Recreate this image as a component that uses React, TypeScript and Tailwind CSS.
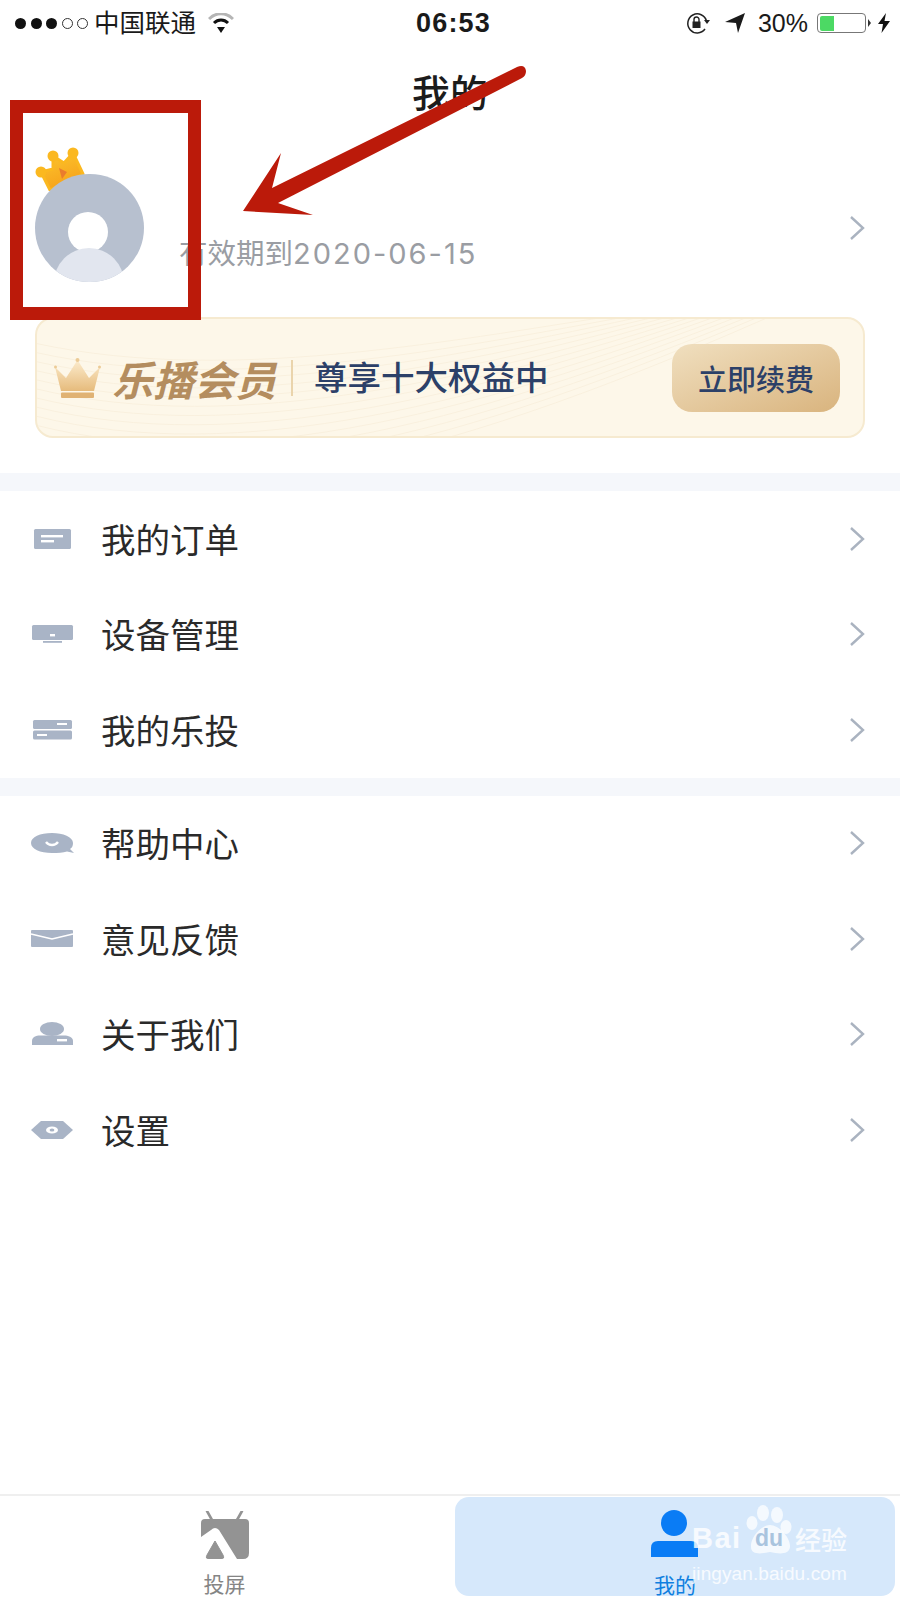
// App.tsx - "我的" profile screen
import React from "react";

const cjk = "font-['Noto_Sans_CJK_SC','Noto_Sans',sans-serif]";

const Chevron = () => (
  <svg width="16" height="24" viewBox="0 0 16 24" fill="none" className="shrink-0">
    <path d="M2 1 L14 12 L2 23" stroke="#aab3c0" strokeWidth="2.4" />
  </svg>
);

// menu glyphs, all on a 44x24 box
const icons: Record<string, React.ReactNode> = {
  order: (
    <>
      <rect x="4" y="2" width="37" height="20" rx="1.5" fill="#a9b4c6" />
      <rect x="11" y="8" width="22" height="2.4" fill="#fff" />
      <rect x="11" y="13" width="13" height="2.4" fill="#fff" />
    </>
  ),
  device: (
    <>
      <rect x="2" y="3" width="41" height="15" rx="1.5" fill="#a9b4c6" />
      <rect x="20" y="12" width="5" height="2.4" fill="#fff" />
      <rect x="13" y="19" width="19" height="1.8" fill="#a9b4c6" />
    </>
  ),
  projector: (
    <>
      <rect x="3" y="2" width="39" height="9" rx="1.5" fill="#a9b4c6" />
      <rect x="3" y="12.5" width="39" height="9" rx="1.5" fill="#a9b4c6" />
      <rect x="27" y="5" width="10" height="2" fill="#fff" />
      <rect x="7" y="16" width="10" height="2" fill="#fff" />
    </>
  ),
  help: (
    <>
      <path
        d="M22 2 C33 2 43 6 43 12 C43 15 42 17 40 18 L44 22 L37 20.5 C33 22 28 22 22 22 C10 22 1 18 1 12 C1 6 10 2 22 2 Z"
        fill="#a9b4c6"
      />
      <path d="M16 11 C19 15 25 15 28 11" stroke="#fff" strokeWidth="2.4" fill="none" />
    </>
  ),
  mail: (
    <>
      <rect x="1" y="3" width="42" height="17" rx="1" fill="#a9b4c6" />
      <path d="M1 7 L22 12 L43 7" stroke="#fff" strokeWidth="1.6" fill="none" />
    </>
  ),
  about: (
    <>
      <ellipse cx="22" cy="7" rx="12" ry="7" fill="#a9b4c6" />
      <path d="M2 23 L2 19 C2 15 6 13.5 10 13.5 L34 13.5 C38 13.5 43 15 43 19 L43 23 Z" fill="#a9b4c6" />
      <rect x="27" y="17" width="10" height="2.4" fill="#fff" />
    </>
  ),
  settings: (
    <>
      <path d="M11 3 L33 3 L43 12 L33 21 L11 21 L1 12 Z" fill="#a9b4c6" />
      <ellipse cx="22" cy="12" rx="6" ry="3.6" fill="#fff" />
      <ellipse cx="22" cy="12" rx="2.4" ry="1.5" fill="#a9b4c6" />
    </>
  ),
};

const groupOne = [
  { icon: "order", label: "我的订单" },
  { icon: "device", label: "设备管理" },
  { icon: "projector", label: "我的乐投" },
];

const groupTwo = [
  { icon: "help", label: "帮助中心" },
  { icon: "mail", label: "意见反馈" },
  { icon: "about", label: "关于我们" },
  { icon: "settings", label: "设置" },
];

const MenuRow = ({ icon, label }: { icon: string; label: string }) => (
  <div className="flex h-[95.5px] items-center pl-[30px] pr-[35px]">
    <svg width="44" height="24" viewBox="0 0 44 24" className="shrink-0">
      {icons[icon]}
    </svg>
    <span className={`ml-[27px] flex-1 -translate-y-[1px] text-[34.5px] leading-[40px] text-[#2a2a2a] ${cjk}`}>{label}</span>
    <Chevron />
  </div>
);

const StatusBar = () => (
  <div className="grid h-[46px] grid-cols-[1fr_auto_1fr] items-center font-['Liberation_Sans',sans-serif] text-[#1a1a1a]">
    <div className="flex items-center pl-[15px]">
      <div className="flex gap-[4.5px]">
        <span className="h-[11px] w-[11px] rounded-full bg-[#111]" />
        <span className="h-[11px] w-[11px] rounded-full bg-[#111]" />
        <span className="h-[11px] w-[11px] rounded-full bg-[#111]" />
        <span className="h-[11px] w-[11px] rounded-full border border-[#333]" />
        <span className="h-[11px] w-[11px] rounded-full border border-[#333]" />
      </div>
      <span className={`ml-[6px] -translate-y-[2px] text-[25.5px] leading-[30px] ${cjk}`}>中国联通</span>
      <svg width="26" height="20" viewBox="0 0 26 20" className="ml-[12px]">
        <path d="M1 6 C8 -1 18 -1 25 6" stroke="#b5b5b5" strokeWidth="3" fill="none" />
        <path d="M6 10 C10 6 16 6 20 10" stroke="#111" strokeWidth="3" fill="none" />
        <path d="M9 14 L17 14 L13 20 Z" fill="#111" />
      </svg>
    </div>
    <span className="pl-[7px] text-[27px] font-bold leading-[30px] tracking-[1.2px]">06:53</span>
    <div className="flex items-center justify-end pr-[10px]">
      <svg width="25" height="22" viewBox="0 0 25 22" fill="none">
        <path d="M19 17 A9.5 9.5 0 1 1 20.5 9" stroke="#222" strokeWidth="1.5" />
        <path d="M18 8 L24 8 L21 12 Z" fill="#222" />
        <rect x="6.5" y="9.5" width="8" height="6.5" fill="#222" />
        <path d="M8 10 V7.5 a2.5 2.5 0 0 1 5 0 V10" stroke="#222" strokeWidth="1.4" />
      </svg>
      <svg width="20" height="20" viewBox="0 0 20 20" className="ml-[14px]">
        <path d="M0 9 L20 0 L13 20 L11 10 Z" fill="#1a1a1a" />
      </svg>
      <span className="ml-[13px] text-[25px] leading-[30px]">30%</span>
      <div className="ml-[9px] flex h-[20px] w-[49px] rounded-[4px] border border-[#777] p-[1.5px]">
        <div className="h-full w-[14px] rounded-l-[2px] bg-[#4cd964]" />
      </div>
      <span className="ml-[2px] h-0 w-0 border-y-[4px] border-l-[3px] border-y-transparent border-l-[#333]" />
      <svg width="12" height="20" viewBox="0 0 12 20" className="ml-[7px]">
        <path d="M8 0 L0 11 L5 11 L3.5 20 L12 8 L6.5 8 Z" fill="#111" />
      </svg>
    </div>
  </div>
);

const MemberBanner = () => (
  <div className="relative mx-[35px] mt-[35px] flex h-[121px] items-center overflow-hidden rounded-[18px] border-2 border-[#f6ead0] bg-[#fdf7e9] pl-[17px] pr-[23px]">
    <svg width="830" height="121" viewBox="0 0 830 121" fill="none" className="absolute left-0 top-0">
      {[0, 1, 2, 3, 4, 5, 6, 7, 8, 9, 10, 11, 12, 13].map((i) => (
        <path
          key={i}
          d={`M${-20} ${i * 9 + 20} C${180} ${i * 10 + 70} ${420} ${i * 9 + 20} ${620 + i * 10} ${-10} `}
          stroke="#f9f0de"
          strokeWidth="1"
        />
      ))}
    </svg>
    <svg width="47" height="40" viewBox="0 0 47 40" className="relative shrink-0">
      <defs>
        <linearGradient id="bannerCrown" x1="0" y1="0" x2="0" y2="1">
          <stop offset="0" stopColor="#fcecce" />
          <stop offset="1" stopColor="#e6bb7c" />
        </linearGradient>
      </defs>
      <path d="M1 9 L12 20 L23.5 2 L35 20 L46 9 L40 33 L7 33 Z" fill="url(#bannerCrown)" />
      <circle cx="23.5" cy="2" r="2" fill="#eccb96" />
      <circle cx="1.5" cy="9" r="1.5" fill="#eccb96" />
      <circle cx="45.5" cy="9" r="1.5" fill="#eccb96" />
      <rect x="7" y="34.5" width="33" height="5.5" rx="1" fill="#e0b273" />
    </svg>
    <span className={`relative ml-[11px] text-[41px] font-bold italic leading-[44px] text-[#b48d5f] ${cjk}`}>乐播会员</span>
    <span className="relative ml-[15px] h-[36px] w-[2px] bg-[#ead4ac]" />
    <span className={`relative ml-[21px] flex-1 -translate-y-[2px] text-[33.5px] font-medium leading-[40px] text-[#2c4068] ${cjk}`}>尊享十大权益中</span>
    <button className={`relative flex h-[68px] w-[168px] items-center justify-center rounded-[20px] bg-gradient-to-br from-[#f0dfbf] to-[#d9b47e] text-[29px] font-medium leading-[34px] text-[#2c4068] ${cjk}`}>
      立即续费
    </button>
  </div>
);

const TabBar = () => (
  <div className="flex h-[106px] border-t-2 border-[#efefef]">
    <div className="flex w-[455px] flex-col items-center pr-[6px] pt-[15px]">
      <svg width="48" height="48" viewBox="0 0 48 48" fill="#939393">
        <path d="M6 0 L11 9 M41 0 L36 9" stroke="#939393" strokeWidth="2.6" strokeLinecap="round" />
        <path d="M4 8 L44 8 Q48 8 48 12 L48 42 Q48 48 42 48 L36 48 L18 19 Q14 15 10 19 L0 26 L0 12 Q0 8 4 8 Z" />
        <path d="M14 30 L22 44 Q24 48 20 48 L8 48 Q4 48 6 44 Z" stroke="#939393" strokeWidth="1" strokeLinejoin="round" />
      </svg>
      <span className={`mt-[12px] text-[21px] leading-[24px] text-[#858585] ${cjk}`}>投屏</span>
    </div>
    <div className="mt-[1px] flex h-[99px] w-[440px] flex-col items-center rounded-[14px] bg-[#d6e8fb] pt-[13px]">
      <svg width="50" height="48" viewBox="0 0 50 48">
        <circle cx="24" cy="13" r="13" fill="#0a7cf5" />
        <path d="M1 47 L1 38 Q1 31 8 31 L41 31 Q48 31 48 38 L48 47 Z" fill="#0a7cf5" />
      </svg>
      <span className={`mt-[14px] text-[21px] leading-[24px] text-[#0f7fe0] ${cjk}`}>我的</span>
    </div>
  </div>
);

const BaiduMark = () => (
  <div className="absolute left-[692px] top-[1505px] w-[165px] font-['Liberation_Sans',sans-serif] text-white/80">
    <div className="flex h-[50px] items-end">
      <span className="w-[54px] pb-[1px] text-[29px] font-bold leading-[32px] tracking-[1.5px]">Bai</span>
      <div className="relative h-[50px] w-[49px]">
        <svg width="49" height="50" viewBox="0 0 49 50" className="absolute left-0 top-0">
          <g fill="#ffffff" fillOpacity="0.72">
            <ellipse cx="17" cy="8" rx="6" ry="8" />
            <ellipse cx="31" cy="10" rx="6" ry="8" />
            <ellipse cx="6" cy="18" rx="5.5" ry="7" />
            <ellipse cx="40" cy="22" rx="5.5" ry="7" />
            <path d="M24 20 C33 20 45 33 44 42 C43 50 33 49 24 47 C15 49 5 50 5 42 C4 33 15 20 24 20 Z" />
          </g>
        </svg>
        <span className="absolute bottom-[4px] left-[9px] text-[23px] font-bold leading-[26px] text-[#a9c4de]">du</span>
      </div>
      <span className={`pb-[1px] text-[26px] font-medium leading-[30px] ${cjk}`}>经验</span>
    </div>
    <div className="mt-[8px] text-[19px] leading-[22px] tracking-[0.1px]">jingyan.baidu.com</div>
  </div>
);

// the red box and arrow someone painted over the screenshot
const Annotation = () => (
  <>
    <div className="absolute left-[10px] top-[100px] h-[220px] w-[191px] border-[13px] border-[#bb1a0a]" />
    <svg width="900" height="330" viewBox="0 0 900 330" className="absolute left-0 top-0">
      <path
        d="M243 211 L281 153 L272 188 L517 67 Q525 64 526 71 Q526 76 522 78 L278 203 L313 215 Z"
        fill="#bb1a0a"
      />
    </svg>
  </>
);

export default function App() {
  return (
    <div className={`relative flex h-[1600px] w-[900px] flex-col overflow-hidden bg-white ${cjk}`}>
      <StatusBar />
      <div className="flex h-[90px] items-center justify-center">
        <h1 className={`text-[38px] font-medium leading-[44px] text-[#1c1c1c] ${cjk}`}>我的</h1>
      </div>

      <div className="flex items-center pl-[35px] pr-[35px] pt-[38px]">
        <div className="relative h-[108px] w-[109px] shrink-0">
          <svg width="54" height="44" viewBox="0 0 54 44" className="absolute left-0 top-[-27px]">
            <defs>
              <linearGradient id="avatarCrown" x1="0" y1="0" x2="0.4" y2="1">
                <stop offset="0" stopColor="#fcc62f" />
                <stop offset="1" stopColor="#f6a21a" />
              </linearGradient>
            </defs>
            <path
              d="M6 25 L18 22 L18 9 L29 16 L38 6 L48 27 L15 43 Z"
              fill="url(#avatarCrown)"
              stroke="#fbb820"
              strokeWidth="3"
              strokeLinejoin="round"
            />
            <circle cx="6" cy="25" r="5.5" fill="#fbb820" />
            <circle cx="18" cy="9" r="5.5" fill="#fbb820" />
            <circle cx="38" cy="6" r="5.5" fill="#fbb820" />
            <path d="M24 21 L32 25 L27 32 Z" fill="#ea7c2c" />
          </svg>
          <div className="absolute inset-0 overflow-hidden rounded-full bg-[#b7c0cf]">
            <div className="absolute left-[33px] top-[38px] h-[40px] w-[40px] rounded-full bg-white" />
            <div className="absolute left-[19px] top-[74px] h-[70px] w-[70px] rounded-full bg-[#e2e6ef]" />
          </div>
        </div>
        <div className="flex-1 pl-[35px] pt-[50px] text-[28.5px] leading-[34px] text-[#9a9da3]">
          有效期到<span className="font-['Inter',sans-serif] text-[29px] tracking-[2px]">2020-06-15</span>
        </div>
        <Chevron />
      </div>

      <MemberBanner />

      <div className="mt-[35px] h-[18px] bg-[#f5f7fb]" />
      {groupOne.map((row) => (
        <MenuRow key={row.label} {...row} />
      ))}
      <div className="h-[18px] bg-[#f5f7fb]" />
      {groupTwo.map((row) => (
        <MenuRow key={row.label} {...row} />
      ))}

      <div className="flex-1" />
      <TabBar />

      <BaiduMark />
      <Annotation />
    </div>
  );
}
